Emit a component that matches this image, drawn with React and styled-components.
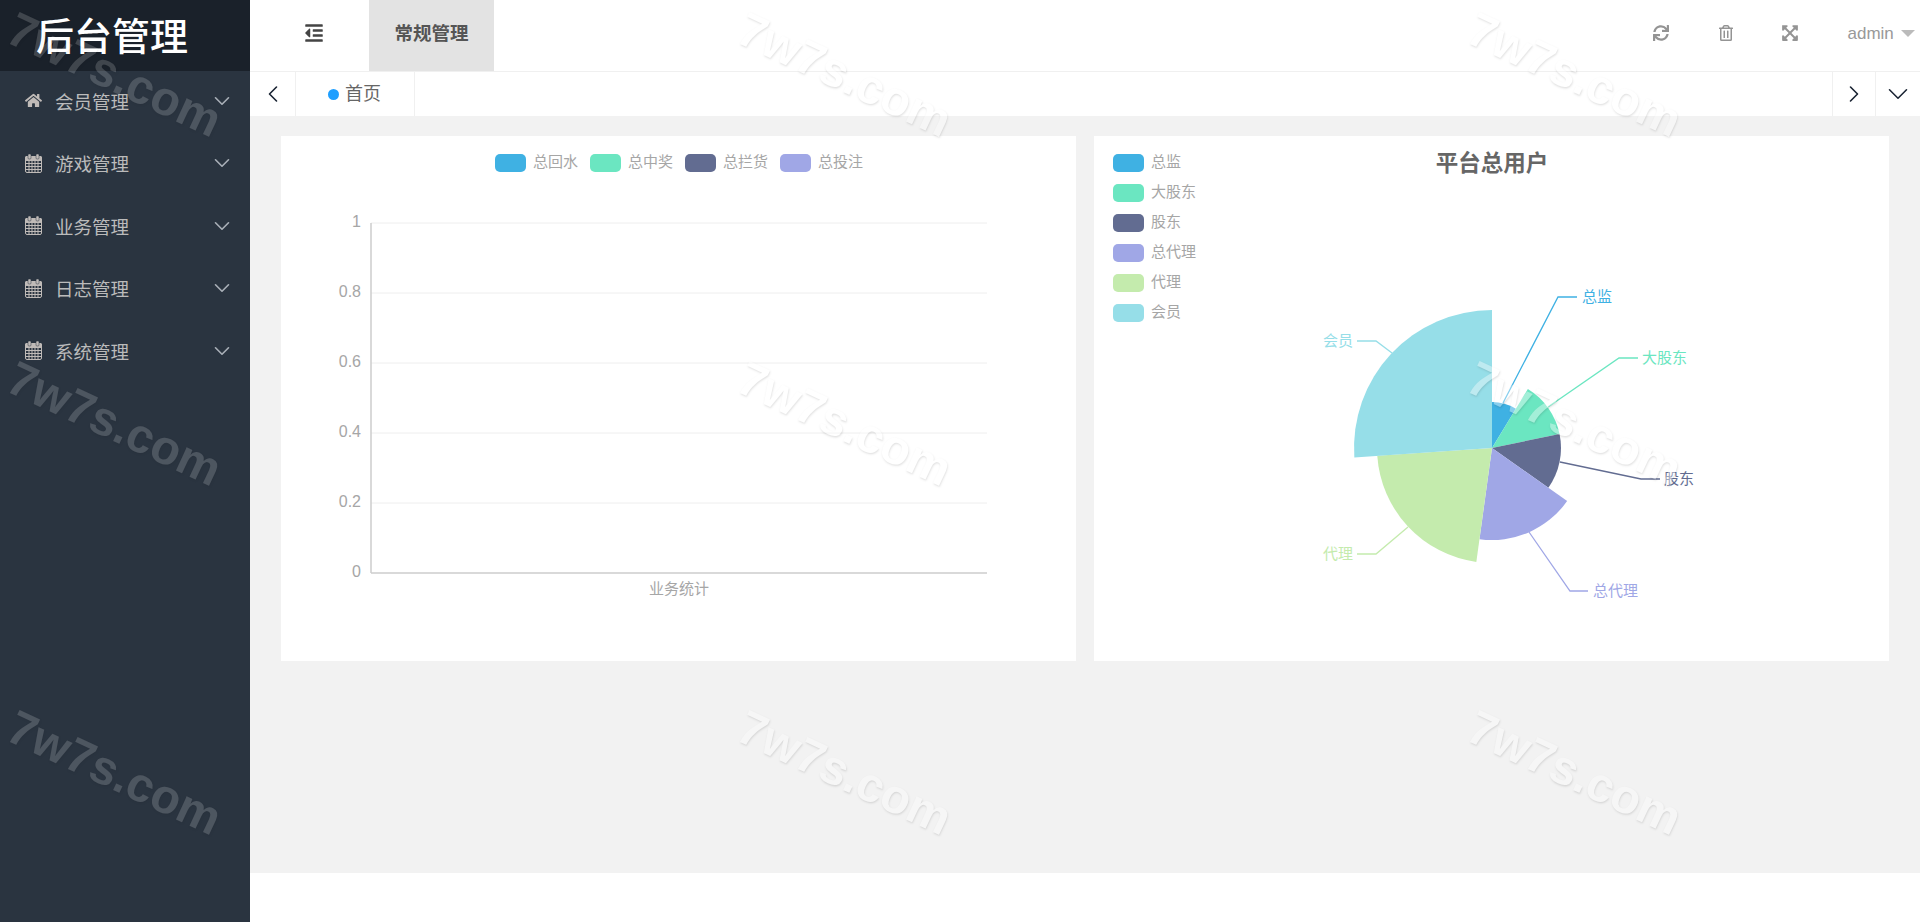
import React from 'react';
import styled, { createGlobalStyle } from 'styled-components';
import { FaHome, FaOutdent, FaSync, FaRegTrashAlt, FaExpandArrowsAlt } from 'react-icons/fa';
import { ChevronDown, ChevronLeft, ChevronRight } from 'lucide-react';

const FONT = '"Liberation Sans", "Noto Sans CJK SC", sans-serif';

const GlobalStyle = createGlobalStyle`
  html, body { margin: 0; padding: 0; height: 100%; overflow: hidden; background: #fff; }
  * { box-sizing: border-box; }
  body { font-family: ${FONT}; }
`;

const Page = styled.div`
  position: relative;
  display: flex;
  width: 1920px;
  height: 922px;
  overflow: hidden;
`;

const Sidebar = styled.aside`
  width: 250px;
  flex-shrink: 0;
  background: #2a3440;
`;

const Logo = styled.div`
  height: 71px;
  background: #1a212a;
  color: #fff;
  font-size: 38px;
  font-weight: 500;
  line-height: 74px;
  padding-left: 36px;
`;

const MenuRow = styled.div`
  height: 62.5px;
  display: flex;
  align-items: center;
  padding: 0 15px 3px 25px;
  color: #bbb;
  font-size: 18.5px;
`;

const MenuIcon = styled.span`
  width: 30px;
  display: flex;
  align-items: center;
`;

const MenuLabel = styled.span`
  flex: 1;
`;

const Main = styled.main`
  flex: 1;
  display: flex;
  flex-direction: column;
`;

const TopBar = styled.header`
  height: 72px;
  display: flex;
  align-items: stretch;
  border-bottom: 1px solid #f0f0f0;
`;

const Toggle = styled.div`
  width: 119px;
  padding: 0 0 5px 54px;
  display: flex;
  align-items: center;
  color: #444;
`;

const TopTab = styled.div`
  width: 125px;
  height: 71px;
  background: #e3e3e3;
  color: #555;
  font-size: 18.5px;
  font-weight: 700;
  text-align: center;
  line-height: 68px;
`;

const Spacer = styled.div`
  flex: 1;
`;

const ActionBtn = styled.div`
  width: 64.5px;
  padding-bottom: 5px;
  display: flex;
  align-items: center;
  justify-content: center;
  color: #949494;
`;

const User = styled.div`
  width: 97.5px;
  padding: 0 0 4px 25px;
  display: flex;
  align-items: center;
  gap: 7px;
  color: #999;
  font-size: 17px;
`;

const Caret = styled.span`
  width: 0;
  height: 0;
  border-left: 7px solid transparent;
  border-right: 7px solid transparent;
  border-top: 7px solid #bbb;
`;

const TabBar = styled.nav`
  height: 44px;
  display: flex;
  align-items: stretch;
  background: #fff;
`;

const ArrowCell = styled.div`
  width: ${(p) => p.$w}px;
  display: flex;
  align-items: center;
  justify-content: center;
  color: #1a2433;
  border-right: ${(p) => (p.$side === 'right' ? 'none' : '1px solid #f0f0f0')};
  border-left: ${(p) => (p.$side === 'right' ? '1px solid #f0f0f0' : 'none')};
`;

const PageTab = styled.div`
  width: 119px;
  padding: 0 0 4px 32px;
  display: flex;
  align-items: center;
  gap: 6px;
  color: #666;
  font-size: 18px;
  border-right: 1px solid #f0f0f0;
`;

const Dot = styled.span`
  width: 11px;
  height: 11px;
  border-radius: 50%;
  background: #1e9fff;
  margin-top: 4px;
`;

const Content = styled.section`
  height: 757px;
  background: #f2f2f2;
  padding: 20px 31px;
  display: grid;
  grid-template-columns: 795px 795px;
  grid-template-rows: 525px;
  column-gap: 18px;
`;

const Card = styled.div`
  background: #fff;
`;

const ChartSvg = styled.svg`
  display: block;
  width: 795px;
  height: 525px;
`;

const WatermarkLayer = styled.div`
  position: absolute;
  inset: 0;
  display: grid;
  grid-template-columns: repeat(3, 730px);
  grid-auto-rows: 349px;
  pointer-events: none;
`;

const WatermarkCell = styled.div`
  width: 230px;
  height: 148px;
  display: flex;
  align-items: center;
  justify-content: center;
`;

// group opacity so the shadow does not show through the white letters
const Watermark = styled.span`
  transform: rotate(25deg);
  font-family: "Liberation Sans", sans-serif;
  font-size: 48px;
  font-weight: 700;
  white-space: nowrap;
  color: #fff;
  opacity: ${(p) => (p.$dark ? 0.165 : 0.38)};
  text-shadow: 1px 1px 2px rgba(0, 0, 0, 0.3);
`;

const COLORS = ['#3fb1e3', '#6be6c1', '#626c91', '#a0a7e6', '#c4ebad', '#96dee8'];

function CalendarIcon() {
  return (
    <svg width="17" height="19" viewBox="0 0 17 19" fill="none">
      <rect x="0.5" y="2.5" width="16" height="16" rx="1.5" fill="#2a3440" stroke="#c0bbb8" />
      <rect x="0" y="2" width="17" height="5" rx="1.5" fill="#c0bbb8" />
      <rect x="3" y="0" width="3" height="5" rx="1" fill="#c0bbb8" stroke="#2a3440" strokeWidth="0.5" />
      <rect x="11" y="0" width="3" height="5" rx="1" fill="#c0bbb8" stroke="#2a3440" strokeWidth="0.5" />
      <path d="M1 9.5H16M1 12.5H16M1 15.5H16M4 7V18M7 7V18M10 7V18M13 7V18" stroke="#c0bbb8" />
    </svg>
  );
}

const MENU = ['会员管理', '游戏管理', '业务管理', '日志管理', '系统管理'];

const textStyle = { fontFamily: FONT };

function LegendKey({ x, y, color, label }) {
  return (
    <g>
      <rect x={x} y={y} width="31" height="18" rx="5" fill={color} />
      <text x={x + 38} y={y + 8} dy="0.35em" fontSize="15" fill="#a6a6a6" style={textStyle}>{label}</text>
    </g>
  );
}

function BarChart() {
  // card sits at page (281,136), coordinates below are relative to it
  const ticks = ['1', '0.8', '0.6', '0.4', '0.2', '0'];
  return (
    <ChartSvg viewBox="0 0 795 525">
      {['总回水', '总中奖', '总拦货', '总投注'].map((label, i) => (
        <LegendKey key={label} x={214 + i * 95} y={18} color={COLORS[i]} label={label} />
      ))}
      {ticks.map((t, i) => {
        const y = 87 + i * 70;
        return (
          <g key={t}>
            {i < 5 && <line x1="90" x2="706" y1={y} y2={y} stroke="#eee" />}
            <text x="80" y={y - 1.5} dy="0.35em" textAnchor="end" fontSize="16" fill="#a6a6a6" style={textStyle}>{t}</text>
          </g>
        );
      })}
      <line x1="90" x2="90" y1="87" y2="437" stroke="#ccc" strokeWidth="1.5" />
      <line x1="90" x2="706" y1="437" y2="437" stroke="#ccc" strokeWidth="1.5" />
      <text x="398" y="453" dy="0.35em" textAnchor="middle" fontSize="15" fill="#a6a6a6" style={textStyle}>业务统计</text>
    </ChartSvg>
  );
}

const PIE = [
  { name: '总监', value: 2, line: '409,267 464,161 483,161', tx: 488, ty: 161, anchor: 'start' },
  { name: '大股东', value: 3, line: '454,271 525,222 544,222', tx: 548, ty: 221.5, anchor: 'start' },
  { name: '股东', value: 3, line: '466,326 547,343 566,343', tx: 570, ty: 343, anchor: 'start' },
  { name: '总代理', value: 4, line: '435,396 476,455 494,455', tx: 499, ty: 455, anchor: 'start' },
  { name: '代理', value: 5, line: '314,391 282,418 263,418', tx: 259, ty: 418, anchor: 'end' },
  { name: '会员', value: 6, line: '298,217 282,205 263,205', tx: 259, ty: 204.5, anchor: 'end' },
];

function sectorPath(cx, cy, r, from, to) {
  const pt = (a) => [cx + r * Math.sin(a), cy - r * Math.cos(a)];
  const [x1, y1] = pt(from);
  const [x2, y2] = pt(to);
  return `M${cx} ${cy}L${x1} ${y1}A${r} ${r} 0 ${to - from > Math.PI ? 1 : 0} 1 ${x2} ${y2}Z`;
}

function PieChart() {
  const total = PIE.reduce((s, d) => s + d.value, 0);
  let angle = 0;
  return (
    <ChartSvg viewBox="0 0 795 525">
      {PIE.map((d, i) => (
        <LegendKey key={d.name} x={19} y={18 + i * 30} color={COLORS[i]} label={d.name} />
      ))}
      <text x="398" y="27" dy="0.35em" textAnchor="middle" fontSize="22.5" fontWeight="700" fill="#666" style={textStyle}>平台总用户</text>
      {PIE.map((d, i) => {
        const from = angle;
        angle += (d.value / total) * Math.PI * 2;
        return <path key={d.name} d={sectorPath(398, 312, d.value * 23, from, angle)} fill={COLORS[i]} />;
      })}
      {PIE.map((d, i) => (
        <g key={d.name}>
          <polyline points={d.line} fill="none" stroke={COLORS[i]} strokeWidth="1.3" />
          <text x={d.tx} y={d.ty} dy="0.35em" textAnchor={d.anchor} fontSize="15" fill={COLORS[i]} style={textStyle}>{d.name}</text>
        </g>
      ))}
    </ChartSvg>
  );
}

export default function App() {
  return (
    <Page>
      <GlobalStyle />
      <Sidebar>
        <Logo>后台管理</Logo>
        {MENU.map((item, i) => (
          <MenuRow key={item}>
            <MenuIcon>{i === 0 ? <FaHome size={17} color="#c0bbb8" /> : <CalendarIcon />}</MenuIcon>
            <MenuLabel>{item}</MenuLabel>
            <ChevronDown size={26} strokeWidth={1.5} color="#a9b0b8" />
          </MenuRow>
        ))}
      </Sidebar>
      <Main>
        <TopBar>
          <Toggle><FaOutdent size={20} /></Toggle>
          <TopTab>常规管理</TopTab>
          <Spacer />
          <ActionBtn><FaSync size={16} /></ActionBtn>
          <ActionBtn><FaRegTrashAlt size={16} /></ActionBtn>
          <ActionBtn><FaExpandArrowsAlt size={18} /></ActionBtn>
          <User>admin<Caret /></User>
        </TopBar>
        <TabBar>
          <ArrowCell $w={46}><ChevronLeft size={28} strokeWidth={1.4} /></ArrowCell>
          <PageTab><Dot />首页</PageTab>
          <Spacer />
          <ArrowCell $side="right" $w={43}><ChevronRight size={28} strokeWidth={1.4} /></ArrowCell>
          <ArrowCell $side="right" $w={45}><ChevronDown size={34} strokeWidth={1.1} /></ArrowCell>
        </TabBar>
        <Content>
          <Card><BarChart /></Card>
          <Card><PieChart /></Card>
        </Content>
      </Main>
      <WatermarkLayer>
        {Array.from({ length: 9 }, (_, i) => (
          <WatermarkCell key={i}><Watermark $dark={i % 3 === 0}>7w7s.com</Watermark></WatermarkCell>
        ))}
      </WatermarkLayer>
    </Page>
  );
}
